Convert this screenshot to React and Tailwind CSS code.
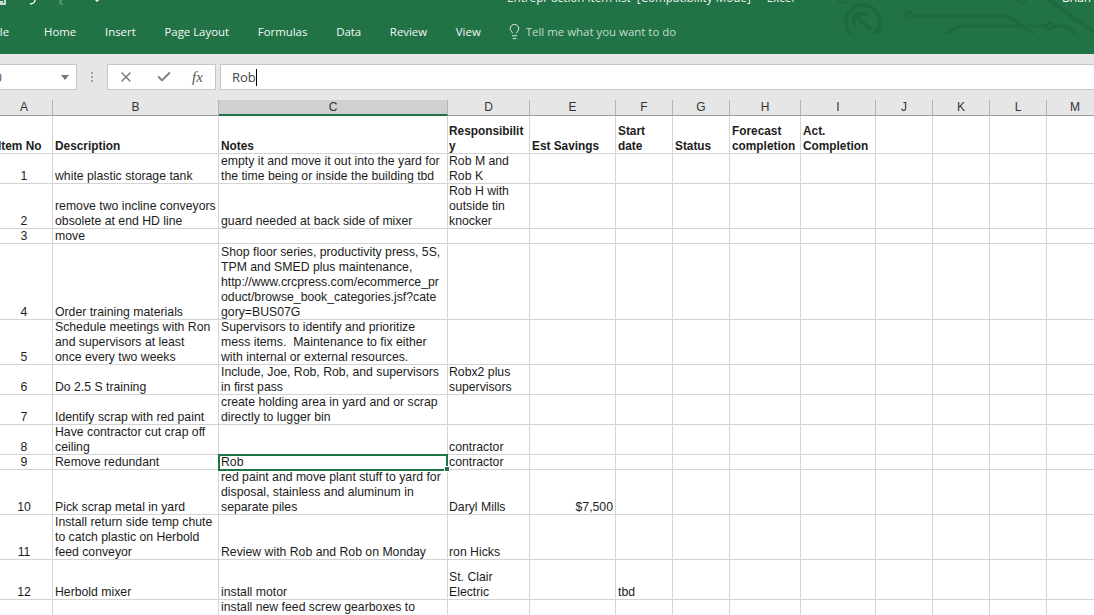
import React from "react";
import { X, Check, Lightbulb } from "lucide-react";

const columns = [
  { name: "A", width: "w-[53px]" },
  { name: "B", width: "w-[166px]" },
  { name: "C", width: "w-[229px]" },
  { name: "D", width: "w-[82px]" },
  { name: "E", width: "w-[86px]" },
  { name: "F", width: "w-[57px]" },
  { name: "G", width: "w-[57px]" },
  { name: "H", width: "w-[71px]" },
  { name: "I", width: "w-[75px]" },
  { name: "J", width: "w-[57px]" },
  { name: "K", width: "w-[57px]" },
  { name: "L", width: "w-[57px]" },
  { name: "M", width: "w-[57px]" },
];

const tabs = ["Home", "Insert", "Page Layout", "Formulas", "Data", "Review", "View"];

const rows = [
  { height: "h-[30px]", no: "1", desc: "white plastic storage tank", notes: "empty it and move it out into the yard for\nthe time being or inside the building tbd", resp: "Rob M and\nRob K" },
  { height: "h-[45px]", no: "2", desc: "remove two incline conveyors\nobsolete at end HD line", notes: "guard needed at back side of mixer", resp: "Rob H with\noutside tin\nknocker" },
  { height: "h-[15px]", no: "3", desc: "move" },
  { height: "h-[76px]", no: "4", desc: "Order training materials", notes: "Shop floor series, productivity press, 5S,\nTPM and SMED plus maintenance,\nhttp://www.crcpress.com/ecommerce_pr\noduct/browse_book_categories.jsf?cate\ngory=BUS07G" },
  { height: "h-[45px]", no: "5", desc: "Schedule meetings with Ron\nand supervisors at least\nonce every two weeks", notes: "Supervisors to identify and prioritize\nmess items.  Maintenance to fix either\nwith internal or external resources." },
  { height: "h-[30px]", no: "6", desc: "Do 2.5 S training", notes: "Include, Joe, Rob, Rob, and supervisors\nin first pass", resp: "Robx2 plus\nsupervisors" },
  { height: "h-[30px]", no: "7", desc: "Identify scrap with red paint", notes: "create holding area in yard and or scrap\ndirectly to lugger bin" },
  { height: "h-[30px]", no: "8", desc: "Have contractor cut crap off\nceiling", resp: "contractor" },
  { height: "h-[15px]", no: "9", desc: "Remove redundant", notes: "Rob", resp: "contractor", selected: true },
  { height: "h-[45px]", no: "10", desc: "Pick scrap metal in yard", notes: "red paint and move plant stuff to yard for\ndisposal, stainless and aluminum in\nseparate piles", resp: "Daryl Mills", savings: "$7,500" },
  { height: "h-[45px]", no: "11", desc: "Install return side temp chute\nto catch plastic on Herbold\nfeed conveyor", notes: "Review with Rob and Rob on Monday", resp: "ron Hicks" },
  { height: "h-[40px]", no: "12", desc: "Herbold mixer", notes: "install motor", resp: "St. Clair\nElectric", start: "tbd" },
  { height: "h-[40px]", no: "", desc: "", notes: "install new feed screw gearboxes to", top: true },
];

const headers = [
  "Item No",
  "Description",
  "Notes",
  "Responsibilit\ny",
  "Est Savings",
  "Start\ndate",
  "Status",
  "Forecast\ncompletion",
  "Act.\nCompletion",
];

// bottom aligned text sits one pixel over the cell's border, like Excel draws it
const Cell = ({ width, height, className = "", children }) => (
  <div className={`${width} ${height} shrink-0 flex border-r border-b border-[#d4d4d4] whitespace-pre overflow-hidden ${className}`}>
    <span className="-mb-px">{children}</span>
  </div>
);

const Circuit = () => (
  <svg className="absolute left-[830px] top-0" width="264" height="34" viewBox="0 0 264 34" fill="none" stroke="#1e6a40" strokeWidth="3">
    <circle cx="33" cy="22" r="17" strokeWidth="4" />
    <path d="M24 14h14M24 14v13M25 15l16 15" strokeWidth="4" />
    <circle cx="79" cy="16" r="3.5" />
    <path d="M83 16h95l26 18" />
    <path d="M116 34l14-8h86" />
    <circle cx="220" cy="26" r="3.5" />
    <path d="M224 26h12l10 8" />
    <path d="M216 -2l48 34" strokeWidth="4" />
    <circle cx="13" cy="0" r="3.5" />
    <circle cx="191" cy="0" r="3.5" />
  </svg>
);

const App = () => {
  return (
    <div className="w-[1094px] h-[615px] overflow-hidden bg-white font-['Liberation_Sans',Arial,sans-serif] text-[12.25px] leading-[15px] text-[#1c1c1c]">
      {/* Title bar and ribbon tabs */}
      <div className="relative h-[54px] bg-[#217346] overflow-hidden font-['Open_Sans',sans-serif]">
        <Circuit />
        <div className="relative h-[19px] text-white">
          <svg className="absolute left-0 top-0" width="110" height="12" viewBox="0 0 110 12" fill="none" stroke="#fff" strokeWidth="1.5">
            <path d="M0 4h5V0M0 2h3" />
            <path d="M30 4c3 0 5-2 5-4" />
            <path d="M62 0c-3 1-3 4 1 4" stroke="#5f9c7b" />
            <path d="M95 0l2 2 2-2z" fill="#fff" stroke="none" />
          </svg>
          <span className="absolute left-[507px] -top-[10px] text-[11.7px] leading-[14px] whitespace-pre text-[#e8f1ec]">Entrepr action item list  [Compatibility Mode]  -  Excel</span>
          <span className="absolute left-[1062px] -top-[10px] text-[11.7px] leading-[14px] whitespace-pre text-white">Brian F</span>
        </div>
        <div className="relative flex items-center h-[24px] -ml-[9px] text-[11.4px] text-[#f4f8f6]">
          <span className="mr-[35px]">File</span>
          <div className="flex gap-[28.75px]">
            {tabs.map((tab) => (
              <span key={tab}>{tab}</span>
            ))}
          </div>
          <div className="flex items-center ml-[25px] text-[#c3dccd]">
            <Lightbulb size={17} strokeWidth={1.2} className="text-white" />
            <span className="ml-[3px] text-[11.45px]">Tell me what you want to do</span>
          </div>
        </div>
      </div>

      {/* Formula bar */}
      <div className="h-[46px] bg-[#e6e6e6] pt-[10px] flex items-start font-['Open_Sans',sans-serif]">
        <div className="w-[77px] h-[26px] bg-white border border-[#c6c6c6] border-l-0 flex items-center justify-between pr-[7px] text-[12px] text-[#444]">
          <span className="-ml-[5px]">0</span>
          <span className="w-0 h-0 border-x-[4px] border-x-transparent border-t-[5px] border-t-[#777]" />
        </div>
        <div className="w-[30px] h-[26px] flex flex-col items-center justify-center gap-[2px]">
          <span className="w-[2px] h-[2px] bg-[#a0a0a0]" />
          <span className="w-[2px] h-[2px] bg-[#a0a0a0]" />
          <span className="w-[2px] h-[2px] bg-[#a0a0a0]" />
        </div>
        <div className="w-[109px] h-[26px] bg-white border border-[#c6c6c6] flex items-center pl-[10px]">
          <X size={16} strokeWidth={2} className="text-[#777]" />
          <Check size={16} strokeWidth={3} className="text-[#808080] ml-[22px]" />
          <span className="ml-[20px] font-['Liberation_Serif',serif] italic text-[15px] text-[#555]">fx</span>
        </div>
        <div className="flex-1 h-[26px] bg-white border border-[#c6c6c6] border-r-0 ml-[4px] flex items-center pl-[11px] text-[13px] text-[#444]">
          <span>Rob</span>
          <span className="w-px h-[17px] bg-black" />
        </div>
      </div>

      {/* Column letters */}
      <div className="flex h-[16px] bg-[#e6e6e6] text-[12px] text-[#333]">
        {columns.map((col) => (
          <div
            key={col.name}
            className={`${col.width} shrink-0 h-[16px] flex justify-center items-center border-r border-[#b4b4b4] ${
              col.name === "C" ? "bg-[#d0d0d0] border-b-2 border-b-[#217346]" : "border-b border-b-[#9c9c9c]"
            } ${col.name === "A" ? "pr-[4px]" : ""}`}
          >
            {col.name}
          </div>
        ))}
      </div>

      {/* Header row */}
      <div className="flex font-bold text-[11.85px]">
        {columns.map((col, i) => (
          <Cell
            key={col.name}
            width={col.width}
            height="h-[38px]"
            className={`items-end ${i === 3 ? "pl-px" : "pl-[2px]"} ${i === 0 ? "!pl-0 -indent-[2px]" : ""}`}
          >
            {headers[i]}
          </Cell>
        ))}
      </div>

      {/* Data rows */}
      {rows.map((row, r) => (
        <div key={r} className="flex">
          <Cell width={columns[0].width} height={row.height} className="items-end justify-center pr-[4px]">
            {row.no}
          </Cell>
          <Cell width={columns[1].width} height={row.height} className="items-end pl-[2px]">{row.desc}</Cell>
          {row.selected ? (
            <div className={`${columns[2].width} ${row.height} shrink-0 relative border-b border-r border-[#d4d4d4] pl-[2px]`}>
              {row.notes}
              <div className="absolute -left-px -top-px w-[230px] h-[17px] border-2 border-[#217346]" />
              <div className="absolute z-10 -right-[3px] -bottom-[3px] w-[6px] h-[6px] bg-[#217346] border border-white" />
            </div>
          ) : (
            <Cell width={columns[2].width} height={row.height} className={`pl-[2px] ${row.top ? "items-start" : "items-end"}`}>{row.notes}</Cell>
          )}
          <Cell width={columns[3].width} height={row.height} className="items-end pl-px">{row.resp}</Cell>
          <Cell width={columns[4].width} height={row.height} className="items-end justify-end pr-[2px]">{row.savings}</Cell>
          <Cell width={columns[5].width} height={row.height} className="items-end pl-[2px]">{row.start}</Cell>
          {columns.slice(6).map((col) => (
            <Cell key={col.name} width={col.width} height={row.height} />
          ))}
        </div>
      ))}
    </div>
  );
};

export default App;
